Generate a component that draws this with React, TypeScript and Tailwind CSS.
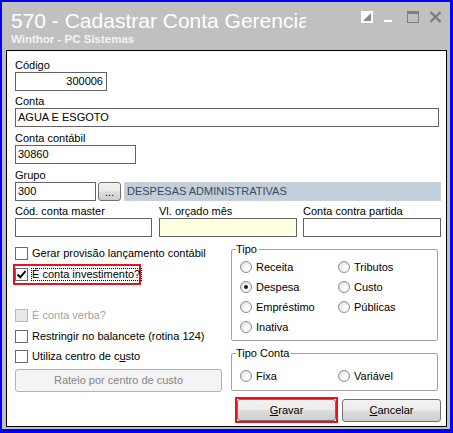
import React from "react";
import clsx from "clsx";

// classic Win7-style controls used by the form below

function Check({ checked = false, disabled = false }: { checked?: boolean; disabled?: boolean }) {
  return (
    <span
      className={clsx(
        "flex h-[13px] w-[13px] shrink-0 items-center justify-center border",
        disabled ? "border-[#b8b8b8] bg-[#e8e8e8]" : "border-[#6a6a6a] bg-white"
      )}
    >
      {checked && (
        <svg width="11" height="11" viewBox="0 0 11 11">
          <path d="M1.5 5.5 L4.2 8.3 L9.5 2.2" fill="none" stroke="#000" strokeWidth="2" />
        </svg>
      )}
    </span>
  );
}

function Radio({ checked = false }: { checked?: boolean }) {
  return (
    <span className="flex h-[12px] w-[12px] shrink-0 items-center justify-center rounded-full border border-[#8e8e8e] bg-[radial-gradient(circle_at_65%_65%,#ffffff_20%,#d4d4d4)]">
      {checked && <span className="h-[4px] w-[4px] rounded-full bg-[#1a1a1a]" />}
    </span>
  );
}

function Option({ label, checked }: { label: string; checked?: boolean }) {
  return (
    <div className="flex h-[20px] items-center gap-[4px]">
      <Radio checked={checked} />
      <span>{label}</span>
    </div>
  );
}

function Box({
  className,
  children,
}: {
  className: string;
  children?: React.ReactNode;
}) {
  return (
    <div
      className={clsx(
        "flex h-[19px] items-center overflow-hidden whitespace-nowrap border border-[#646464]",
        className
      )}
    >
      {children}
    </div>
  );
}

function Field({
  label,
  className,
  children,
}: {
  label: string;
  className?: string;
  children: React.ReactNode;
}) {
  return (
    <div className={clsx("flex flex-col", className)}>
      <span className="whitespace-nowrap leading-[13px]">{label}</span>
      {children}
    </div>
  );
}

function Group({
  title,
  className,
  children,
}: {
  title: string;
  className?: string;
  children: React.ReactNode;
}) {
  return (
    <fieldset className={clsx("w-[207px] border border-[#a2a2a2] rounded-[2px]", className)}>
      <legend className="ml-[4px] pr-[2px] leading-[13px]">{title}</legend>
      {children}
    </fieldset>
  );
}

const buttonFace =
  "flex items-center justify-center rounded-[3px] border border-[#707070] bg-[linear-gradient(#f3f3f3_0%,#ebebeb_48%,#dddddd_52%,#cfcfcf_100%)]";

export default function App() {
  return (
    <div className="flex h-[433px] w-[453px] flex-col border-t-2 border-l-2 border-r-[3px] border-b-[4px] border-[#0000f2] bg-[#c0c0c0] font-['Liberation_Sans',Arial,sans-serif] text-[11px] leading-[13px] text-black">
      {/* title bar */}
      <div className="flex h-[48px] shrink-0 pl-[9px] pr-[8px]">
        <div className="w-[295px] overflow-hidden pt-[7px]">
          <div className="whitespace-nowrap text-[21px] leading-[24px] text-white">
            570 - Cadastrar Conta Gerencial
          </div>
          <div className="whitespace-nowrap text-[11.5px] font-bold leading-[13px] text-[#f4f4f4]">
            Winthor - PC Sistemas
          </div>
        </div>
        <div className="ml-auto flex items-start pt-[9px]">
          <svg width="12" height="12" viewBox="0 0 12 12">
            <rect width="12" height="12" fill="#fff" />
            <polygon points="2,10 10,2 10,10" fill="#8a8a8a" />
          </svg>
          <svg className="ml-[11px] mt-[9px]" width="8" height="2" viewBox="0 0 8 2">
            <rect width="8" height="2" fill="#fff" />
          </svg>
          <svg className="ml-[15px]" width="12" height="12" viewBox="0 0 12 12">
            <rect x="0.5" y="0.5" width="11" height="11" fill="none" stroke="#7e7e7e" />
            <rect width="12" height="3" fill="#7e7e7e" />
          </svg>
          <svg className="ml-[10px]" width="13" height="12" viewBox="0 0 13 12">
            <path d="M1.5 1 L11.5 11 M11.5 1 L1.5 11" stroke="#7e7e7e" strokeWidth="2.4" />
          </svg>
        </div>
      </div>

      {/* form panel */}
      <div className="mb-[2px] ml-[4px] mr-[3px] flex-1 border border-black bg-white pl-[8px] pt-[8px]">
        <Field label="Código">
          <Box className="w-[92px] justify-end pr-[3px]">300006</Box>
        </Field>

        <Field label="Conta" className="mt-[4px]">
          <Box className="w-[424px] pl-[2px]">AGUA E ESGOTO</Box>
        </Field>

        <Field label="Conta contábil" className="mt-[5px]">
          <Box className="w-[121px] pl-[2px]">30860</Box>
        </Field>

        <Field label="Grupo" className="mt-[5px]">
          <div className="flex">
            <Box className="w-[81px] pl-[2px]">300</Box>
            <div className={clsx(buttonFace, "ml-[2px] h-[19px] w-[23px] items-end pb-[3px] leading-[9px]")}>
              ...
            </div>
            <div className="ml-[3px] flex h-[19px] w-[317px] items-center border border-[#c9d0d8] bg-[#c3cedb] pl-[2px] text-[#3f4a56]">
              DESPESAS ADMINISTRATIVAS
            </div>
          </div>
        </Field>

        <div className="mt-[4px] flex">
          <Field label="Cód. conta master">
            <Box className="w-[137px]" />
          </Field>
          <Field label="Vl. orçado mês" className="ml-[7px]">
            <Box className="w-[138px] bg-[#ffffe1]" />
          </Field>
          <Field label="Conta contra partida" className="ml-[6px]">
            <Box className="w-[138px]" />
          </Field>
        </div>

        <div className="mt-[6px] flex">
          {/* flags column */}
          <div className="flex w-[207px] flex-col">
            <div className="flex h-[21px] items-center gap-[4px]">
              <Check />
              <span className="whitespace-nowrap">Gerar provisão lançamento contábil</span>
            </div>
            <div className="-ml-[2px] flex h-[21px] w-[128px] items-center gap-[3px] border-2 border-[#e3141b]">
              <Check checked />
              <span className="whitespace-nowrap border border-dotted border-black pr-[1px] leading-[11px]">
                É conta investimento?
              </span>
            </div>
            <div className="h-[20px]" />
            <div className="flex h-[21px] items-center gap-[4px] text-[#a3a3a3]">
              <Check disabled />
              <span>É conta verba?</span>
            </div>
            <div className="flex h-[20px] items-center gap-[4px]">
              <Check />
              <span className="whitespace-nowrap">Restringir no balancete (rotina 124)</span>
            </div>
            <div className="flex h-[20px] items-center gap-[4px]">
              <Check />
              <span className="whitespace-nowrap">
                Utiliza centro de c<span className="underline">u</span>sto
              </span>
            </div>
            <div className="mt-[3px] flex h-[23px] w-[207px] items-center justify-center rounded-[3px] border border-[#adb2b5] bg-[#f4f4f4] text-[#848484]">
              Rateio por centro de custo
            </div>
          </div>

          {/* tipo / tipo conta / actions */}
          <div className="ml-[9px] flex w-[210px] flex-col">
            <Group title="Tipo">
              <div className="grid grid-cols-[98px_1fr] pb-[3px] pl-[8px] pt-[1px]">
                <Option label="Receita" />
                <Option label="Tributos" />
                <Option label="Despesa" checked />
                <Option label="Custo" />
                <Option label="Empréstimo" />
                <Option label="Públicas" />
                <Option label="Inativa" />
              </div>
            </Group>

            <Group title="Tipo Conta" className="mt-[6px]">
              <div className="grid grid-cols-[98px_1fr] pb-[4px] pl-[8px] pt-[6px]">
                <Option label="Fixa" />
                <Option label="Variável" />
              </div>
            </Group>

            <div className="ml-[4px] mt-[6px] flex items-start">
              <div className="h-[26px] w-[103px] border-2 border-[#e3141b]">
                <div className={clsx(buttonFace, "h-[22px] w-[99px]")}>
                  <span>
                    <span className="underline">G</span>ravar
                  </span>
                </div>
              </div>
              <div className={clsx(buttonFace, "ml-[4px] mt-[2px] h-[23px] w-[99px]")}>
                <span>
                  <span className="underline">C</span>ancelar
                </span>
              </div>
            </div>
          </div>
        </div>
      </div>
    </div>
  );
}
